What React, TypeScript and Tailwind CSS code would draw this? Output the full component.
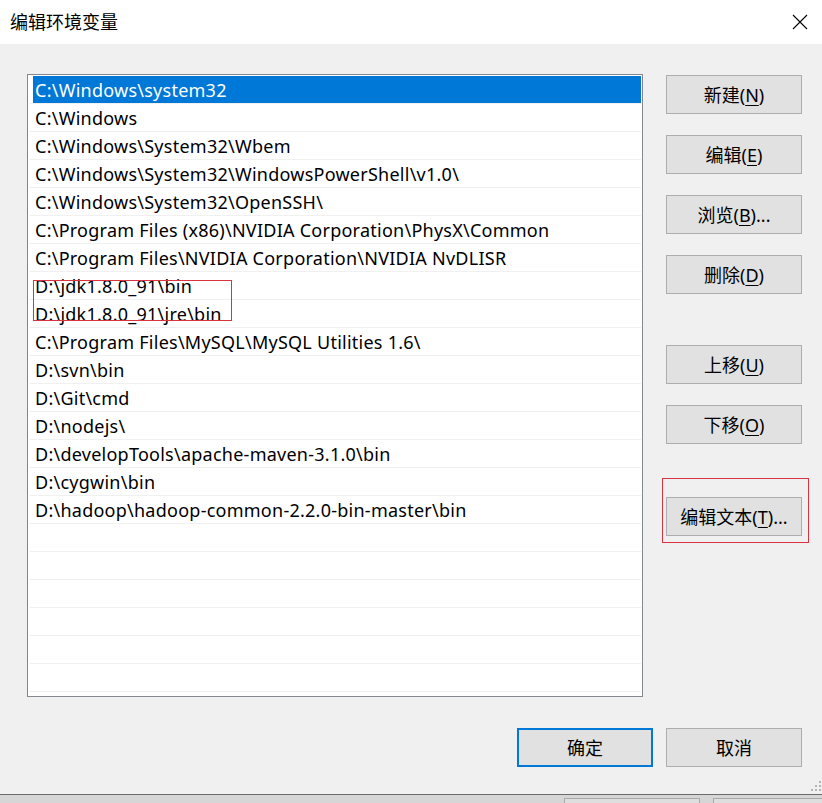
import React from "react";

const PATHS = [
  "C:\\Windows\\system32",
  "C:\\Windows",
  "C:\\Windows\\System32\\Wbem",
  "C:\\Windows\\System32\\WindowsPowerShell\\v1.0\\",
  "C:\\Windows\\System32\\OpenSSH\\",
  "C:\\Program Files (x86)\\NVIDIA Corporation\\PhysX\\Common",
  "C:\\Program Files\\NVIDIA Corporation\\NVIDIA NvDLISR",
  "D:\\jdk1.8.0_91\\bin",
  "D:\\jdk1.8.0_91\\jre\\bin",
  "C:\\Program Files\\MySQL\\MySQL Utilities 1.6\\",
  "D:\\svn\\bin",
  "D:\\Git\\cmd",
  "D:\\nodejs\\",
  "D:\\developTools\\apache-maven-3.1.0\\bin",
  "D:\\cygwin\\bin",
  "D:\\hadoop\\hadoop-common-2.2.0-bin-master\\bin",
];

const FONT = "font-['Noto_Sans','Noto_Sans_CJK_SC',sans-serif]";

function WinButton({
  label,
  hotkey,
  tail = "",
  primary = false,
}: {
  label: string;
  hotkey?: string;
  tail?: string;
  primary?: boolean;
}) {
  return (
    <button
      type="button"
      className={`flex h-[39px] w-[136px] items-center justify-center bg-[#e1e1e1] text-[18px] leading-none text-black ${
        primary ? "border-2 border-[#0078d7]" : "border border-[#adadad]"
      }`}
    >
      {label}
      {hotkey && (
        <>
          (<span className="underline underline-offset-[3px]">{hotkey}</span>)
        </>
      )}
      {tail}
    </button>
  );
}

export default function App() {
  const empty = Array.from({ length: 7 });
  return (
    <div className={`flex h-[803px] w-[822px] flex-col overflow-hidden bg-[#f0f0f0] ${FONT}`}>
      {/* title bar */}
      <div className="flex h-[44px] shrink-0 items-center justify-between bg-white pl-[10px] pr-[14px]">
        <span className="text-[18px] text-black">编辑环境变量</span>
        <svg width="16" height="16" viewBox="0 0 16 16" className="text-black">
          <path d="M1 1 L15 15 M15 1 L1 15" stroke="currentColor" strokeWidth="1.1" />
        </svg>
      </div>

      {/* dialog body */}
      <div className="relative flex flex-1 flex-col bg-[#f0f0f0]">
        <div className="flex pl-[27px] pt-[30px]">
          <div className="relative h-[623px] w-[616px] overflow-hidden border border-[#828790] bg-white pt-[1px] pl-[2px] pr-[1px]">
            {PATHS.map((p, i) => (
              <div key={p} className="h-[28px] border-b border-[#f0f0f0] pl-[3px]">
                <div
                  className={`flex h-[27px] items-center pl-[2px] text-[18px] leading-none tracking-[0.25px] ${
                    i === 0 ? "bg-[#0078d7] text-white" : "text-black"
                  }`}
                >
                  {p}
                </div>
              </div>
            ))}
            {empty.map((_, i) => (
              <div key={i} className="h-[28px] border-b border-[#f0f0f0]" />
            ))}
            {/* annotation box */}
            <div className="absolute left-[5px] top-[205px] h-[41px] w-[199px] border border-[#d8333f]" />
          </div>

          <div className="ml-[23px] flex flex-col pt-[1px]">
            <div className="flex flex-col gap-[21px]">
              <WinButton label="新建" hotkey="N" />
              <WinButton label="编辑" hotkey="E" />
              <WinButton label="浏览" hotkey="B" tail="..." />
              <WinButton label="删除" hotkey="D" />
            </div>
            <div className="mt-[51px] flex flex-col gap-[21px]">
              <WinButton label="上移" hotkey="U" />
              <WinButton label="下移" hotkey="O" />
            </div>
            <div className="relative mt-[53px]">
              <WinButton label="编辑文本" hotkey="T" tail="..." />
              <div className="absolute -left-[4px] -top-[19px] h-[65px] w-[147px] border border-[#d8333f]" />
            </div>
          </div>
        </div>

        <div className="mt-[31px] flex justify-end gap-[13px] pr-[20px]">
          <WinButton label="确定" primary />
          <WinButton label="取消" />
        </div>

        {/* size grip */}
        <svg width="10" height="10" viewBox="0 0 10 10" className="absolute bottom-[3px] right-[1px]">
          <g fill="#b5b5b5">
            <rect x="8" y="0" width="2" height="2" />
            <rect x="4" y="4" width="2" height="2" />
            <rect x="8" y="4" width="2" height="2" />
            <rect x="0" y="8" width="2" height="2" />
            <rect x="4" y="8" width="2" height="2" />
            <rect x="8" y="8" width="2" height="2" />
          </g>
        </svg>
      </div>

      {/* window behind */}
      <div className="flex h-[9px] shrink-0 items-end border-t border-[#6b6b6b] bg-[#d6d6d6]">
        <div className="ml-[564px] h-[5px] w-[136px] border border-b-0 border-[#a9a9a9] bg-[#dedede]" />
        <div className="ml-[13px] h-[5px] flex-1 border border-b-0 border-r-0 border-[#a9a9a9] bg-[#dedede]" />
      </div>
    </div>
  );
}
